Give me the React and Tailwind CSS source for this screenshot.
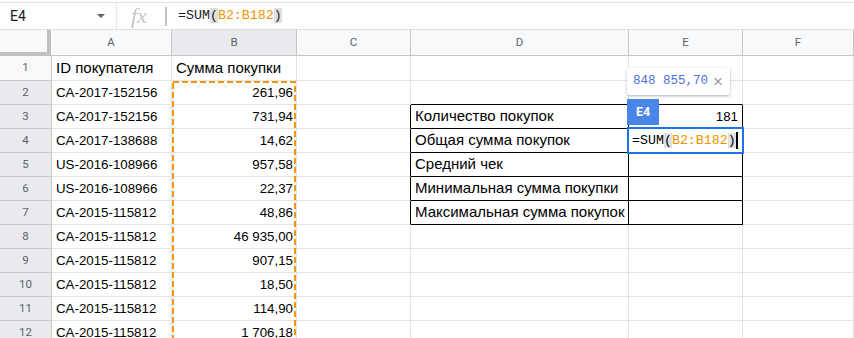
import React from "react";

const W = ["w-[52px]", "w-[120px]", "w-[125px]", "w-[114px]", "w-[218px]", "w-[114px]", "flex-1"];

const colA = [
  "ID покупателя",
  "CA-2017-152156",
  "CA-2017-152156",
  "CA-2017-138688",
  "US-2016-108966",
  "US-2016-108966",
  "CA-2015-115812",
  "CA-2015-115812",
  "CA-2015-115812",
  "CA-2015-115812",
  "CA-2015-115812",
  "CA-2015-115812",
];
const colB = [
  "Сумма покупки",
  "261,96",
  "731,94",
  "14,62",
  "957,58",
  "22,37",
  "48,86",
  "46 935,00",
  "907,15",
  "18,50",
  "114,90",
  "1 706,18",
];
const colD = {
  3: "Количество покупок",
  4: "Общая сумма покупок",
  5: "Средний чек",
  6: "Минимальная сумма покупки",
  7: "Максимальная сумма покупок",
};

const mono = { fontFamily: "'Liberation Mono', monospace" };

function Row({ n }) {
  const inTable = n >= 3 && n <= 7;
  const h = n === 1 ? "h-[25px]" : "h-[24px]";
  const base = "shrink-0 border-r border-b flex items-center overflow-visible whitespace-nowrap";
  const fs = n === 1 ? "text-[15px]" : "text-[13.3px]";
  return (
    <div className={`flex ${h}`}>
      <div
        className={`${W[0]} ${base} justify-center border-[#c4c7c5] text-[11.5px] text-[#5f6368] ${
          n === 1 ? "bg-[#f8f9fa]" : "bg-[#e8eaed]"
        }`}
        style={{ fontFamily: "Roboto, sans-serif" }}
      >
        {n}
      </div>
      <div className={`${W[1]} ${base} ${fs} border-[#e2e3e3] pl-[4px]`}>{colA[n - 1]}</div>
      <div className={`${W[2]} ${base} ${fs} border-[#e2e3e3] ${n === 1 ? "pl-[4px]" : "justify-end pr-[3px]"}`}>
        {colB[n - 1]}
      </div>
      <div
        className={`${W[3]} ${base} border-b-[#e2e3e3] ${
          inTable ? "border-r-black" : "border-r-[#e2e3e3]"
        }`}
      ></div>
      <div
        className={`${W[4]} ${base} text-[15px] pl-[4px] ${inTable ? "border-r-black" : "border-r-[#e2e3e3]"} ${
          n >= 2 && n <= 7 ? "border-b-black" : "border-b-[#e2e3e3]"
        }`}
      >
        {colD[n] || ""}
      </div>
      <div
        className={`${W[5]} ${base} text-[13.3px] justify-end pr-[4px] ${inTable ? "border-r-black" : "border-r-[#e2e3e3]"} ${
          n >= 2 && n <= 7 ? "border-b-black" : "border-b-[#e2e3e3]"
        }`}
      >
        {n === 3 ? "181" : ""}
      </div>
      <div className={`${W[6]} ${base} border-[#e2e3e3]`}></div>
    </div>
  );
}

export default function App() {
  const rows = [1, 2, 3, 4, 5, 6, 7, 8, 9, 10, 11, 12];
  const cols = ["A", "B", "C", "D", "E", "F"];
  return (
    <div
      className="relative w-[854px] h-[338px] overflow-hidden bg-white text-[13.3px] text-black"
      style={{ fontFamily: "'Liberation Sans', Arial, sans-serif" }}
    >
      {/* formula bar */}
      <div className="h-[30px] pt-[2px]">
        <div className="h-full flex items-center border-t border-b border-[#e0e0e0]">
          <div className="w-[117px] h-full flex items-center border-r border-[#e8e8e8] pl-[10px] pr-[10px]">
            <span className="text-[14px] text-[#202124]" style={{ fontFamily: "Roboto, sans-serif" }}>
              E4
            </span>
            <svg className="ml-auto mr-[1px]" width="8" height="4" viewBox="0 0 8 4">
              <path d="M0 0 L8 0 L4 4 Z" fill="#616161" />
            </svg>
          </div>
          <div
            className="w-[38px] pl-[14px] text-[22px] italic text-[#c6c6c6] leading-none"
            style={{ fontFamily: "'Liberation Serif', serif" }}
          >
            fx
          </div>
          <div className="w-[2px] h-[19px] bg-[#c4c4c4] ml-[10px]"></div>
          <div className="ml-[11px] text-[13.3px] text-[#202124]" style={mono}>
            =SUM<span className="bg-[#e0e0e0]">(</span>
            <span className="text-[#f09300]">B2:B182</span>
            <span className="bg-[#e0e0e0]">)</span>
          </div>
        </div>
      </div>

      {/* column headers */}
      <div className="flex h-[26px]" style={{ fontFamily: "Roboto, sans-serif" }}>
        <div className={`${W[0]} shrink-0 bg-[#f8f9fa] border-r-[5px] border-b-[4px] border-[#c0c0c0]`}></div>
        {cols.map((c, i) => (
          <div
            key={c}
            className={`${W[i + 1]} shrink-0 flex items-center justify-center text-[11.5px] text-[#5f6368] border-r border-b border-[#c4c7c5] ${
              c === "B" ? "bg-[#e8eaed]" : "bg-[#f8f9fa]"
            } ${i === 0 ? "-ml-[1px] w-[121px]" : ""}`}
          >
            {c}
          </div>
        ))}
      </div>

      {rows.map((n) => (
        <Row key={n} n={n} />
      ))}

      {/* copy/reference range dashed border */}
      <svg className="absolute left-[171px] top-[80px]" width="128" height="270">
        <rect x="2" y="2" width="122" height="300" fill="none" stroke="#f29900" strokeWidth="2" strokeDasharray="6 3" />
      </svg>

      {/* value preview tooltip */}
      <div className="absolute left-[627px] top-[68px] w-[103px] h-[27px] bg-white rounded-[2px] shadow-[0_1px_3px_rgba(0,0,0,0.3)] flex items-center pl-[6px]">
        <span className="text-[12.5px] text-[#4a6fdc]" style={mono}>
          848 855,70
        </span>
        <span className="ml-[5px] text-[17px] text-[#9e9e9e] leading-none" style={{ fontFamily: "'Liberation Sans', sans-serif" }}>
          ×
        </span>
      </div>

      {/* E4 tag */}
      <div
        className="absolute left-[627px] top-[99px] w-[32px] h-[26px] bg-[#4a86e8] text-white text-[12.5px] font-bold flex items-center justify-center"
        style={{ fontFamily: "Roboto, sans-serif" }}
      >
        E4
      </div>

      {/* cell editor */}
      <div className="absolute left-[627px] top-[127px] w-[117px] h-[27px] border-2 border-[#1a73e8] bg-white flex items-center pl-[3px]">
        <span className="text-[13.3px] text-black" style={mono}>
          =SUM<span className="bg-[#e0e0e0]">(</span>
          <span className="text-[#f09300]">B2:B182</span>
          <span className="bg-[#e0e0e0]">)</span>
        </span>
        <span className="w-[2px] h-[17px] bg-black"></span>
      </div>
    </div>
  );
}
